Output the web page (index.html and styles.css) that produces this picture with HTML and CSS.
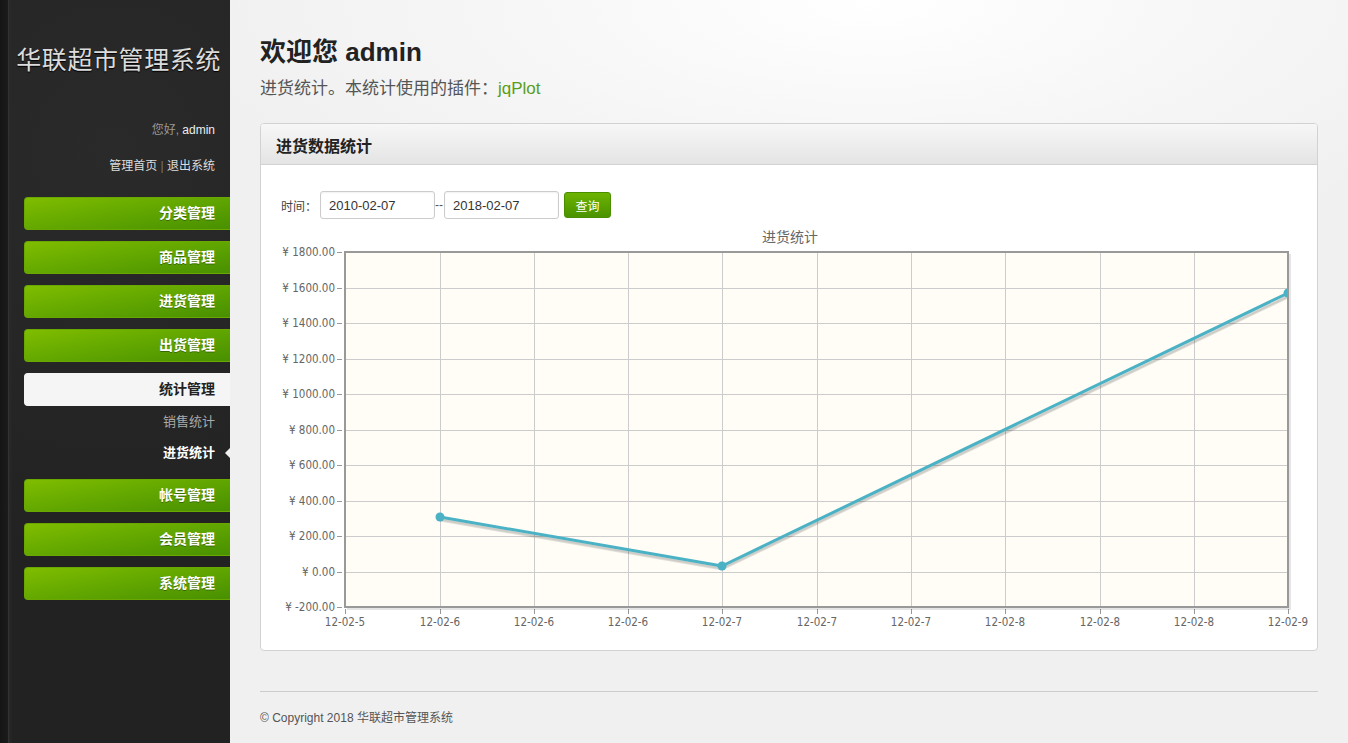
FILE: index.html
```html
<!DOCTYPE html>
<html lang="zh-CN">
<head>
<meta charset="utf-8">
<title>华联超市管理系统</title>
<link rel="stylesheet" href="styles.css">
</head>
<body>
<div class="layout">
  <aside class="sidebar">
    <div class="brand">华联超市管理系统</div>
    <div class="welcome"><span class="muted">您好,</span> admin</div>
    <div class="links"><a href="#">管理首页</a> <span class="sep">|</span> <a href="#">退出系统</a></div>
    <nav class="menu">
      <a class="item" href="#">分类管理</a>
      <a class="item" href="#">商品管理</a>
      <a class="item" href="#">进货管理</a>
      <a class="item" href="#">出货管理</a>
      <a class="item active" href="#">统计管理</a>
      <div class="sub">
        <a class="sub-item" href="#">销售统计</a>
        <a class="sub-item current" href="#">进货统计</a>
      </div>
      <a class="item" href="#">帐号管理</a>
      <a class="item" href="#">会员管理</a>
      <a class="item" href="#">系统管理</a>
    </nav>
  </aside>
  <main class="main">
    <h1 class="title">欢迎您 admin</h1>
    <p class="subtitle">进货统计。本统计使用的插件：<a href="#">jqPlot</a></p>
    <section class="panel">
      <div class="panel-head">进货数据统计</div>
      <div class="panel-body">
        <form class="filter">
          <label class="lbl">时间：</label>
          <input class="date" type="text" value="2010-02-07">
          <span class="dash">--</span>
          <input class="date" type="text" value="2018-02-07">
          <button class="btn" type="button">查询</button>
        </form>
        <svg class="chart" width="1056" height="420" viewBox="0 0 1056 420">
          <defs>
            <clipPath id="plotclip"><rect x="345" y="253" width="943" height="355"/></clipPath>
          </defs>
          <g transform="translate(-261,-225)">
            <text x="790" y="243" class="ctitle" text-anchor="middle">进货统计</text>
            <rect x="345" y="253" width="943" height="355" fill="#fffdf6"/>
            <g class="grid">
              <line x1="345" y1="289" x2="1288" y2="289"/>
              <line x1="345" y1="324" x2="1288" y2="324"/>
              <line x1="345" y1="360" x2="1288" y2="360"/>
              <line x1="345" y1="395" x2="1288" y2="395"/>
              <line x1="345" y1="431" x2="1288" y2="431"/>
              <line x1="345" y1="466" x2="1288" y2="466"/>
              <line x1="345" y1="502" x2="1288" y2="502"/>
              <line x1="345" y1="537" x2="1288" y2="537"/>
              <line x1="345" y1="573" x2="1288" y2="573"/>
              <line x1="440" y1="253" x2="440" y2="608"/>
              <line x1="534" y1="253" x2="534" y2="608"/>
              <line x1="628" y1="253" x2="628" y2="608"/>
              <line x1="722" y1="253" x2="722" y2="608"/>
              <line x1="817" y1="253" x2="817" y2="608"/>
              <line x1="911" y1="253" x2="911" y2="608"/>
              <line x1="1005" y1="253" x2="1005" y2="608"/>
              <line x1="1100" y1="253" x2="1100" y2="608"/>
              <line x1="1194" y1="253" x2="1194" y2="608"/>
            </g>
            <g class="ticks">
              <line x1="337" y1="253.5" x2="342" y2="253.5"/>
              <line x1="337" y1="289.5" x2="342" y2="289.5"/>
              <line x1="337" y1="324.5" x2="342" y2="324.5"/>
              <line x1="337" y1="360.5" x2="342" y2="360.5"/>
              <line x1="337" y1="395.5" x2="342" y2="395.5"/>
              <line x1="337" y1="431.5" x2="342" y2="431.5"/>
              <line x1="337" y1="466.5" x2="342" y2="466.5"/>
              <line x1="337" y1="502.5" x2="342" y2="502.5"/>
              <line x1="337" y1="537.5" x2="342" y2="537.5"/>
              <line x1="337" y1="573.5" x2="342" y2="573.5"/>
              <line x1="337" y1="608.5" x2="342" y2="608.5"/>
              <line x1="345.5" y1="610" x2="345.5" y2="615"/>
              <line x1="440.5" y1="610" x2="440.5" y2="615"/>
              <line x1="534.5" y1="610" x2="534.5" y2="615"/>
              <line x1="628.5" y1="610" x2="628.5" y2="615"/>
              <line x1="722.5" y1="610" x2="722.5" y2="615"/>
              <line x1="817.5" y1="610" x2="817.5" y2="615"/>
              <line x1="911.5" y1="610" x2="911.5" y2="615"/>
              <line x1="1005.5" y1="610" x2="1005.5" y2="615"/>
              <line x1="1100.5" y1="610" x2="1100.5" y2="615"/>
              <line x1="1194.5" y1="610" x2="1194.5" y2="615"/>
              <line x1="1288.5" y1="610" x2="1288.5" y2="615"/>
            </g>
            <g class="ylab" text-anchor="end">
              <text x="335" y="257">¥ 1800.00</text>
              <text x="335" y="293">¥ 1600.00</text>
              <text x="335" y="328">¥ 1400.00</text>
              <text x="335" y="364">¥ 1200.00</text>
              <text x="335" y="399">¥ 1000.00</text>
              <text x="335" y="435">¥ 800.00</text>
              <text x="335" y="470">¥ 600.00</text>
              <text x="335" y="506">¥ 400.00</text>
              <text x="335" y="541">¥ 200.00</text>
              <text x="335" y="577">¥ 0.00</text>
              <text x="335" y="612">¥ -200.00</text>
            </g>
            <g class="xlab" text-anchor="middle">
              <text x="345" y="627">12-02-5</text>
              <text x="440" y="627">12-02-6</text>
              <text x="534" y="627">12-02-6</text>
              <text x="628" y="627">12-02-6</text>
              <text x="722" y="627">12-02-7</text>
              <text x="817" y="627">12-02-7</text>
              <text x="911" y="627">12-02-7</text>
              <text x="1005" y="627">12-02-8</text>
              <text x="1100" y="627">12-02-8</text>
              <text x="1194" y="627">12-02-8</text>
              <text x="1288" y="627">12-02-9</text>
            </g>
            <g clip-path="url(#plotclip)">
              <polyline points="440,521 722,570 1290,297" fill="none" stroke="rgba(0,0,0,0.12)" stroke-width="3"/>
              <polyline points="440,520 722,569 1290,296" fill="none" stroke="rgba(0,0,0,0.08)" stroke-width="3"/>
              <polyline points="440,518 722,567 1288,294" fill="none" stroke="#4bb2c5" stroke-width="3" stroke-linejoin="round"/>
              <circle cx="440" cy="518" r="4.5" fill="#4bb2c5"/>
              <circle cx="722" cy="567" r="4.5" fill="#4bb2c5"/>
              <circle cx="1288" cy="294" r="4.5" fill="#4bb2c5"/>
            </g>
            <polyline points="1290,255 1290,610 347,610" fill="none" stroke="rgba(0,0,0,0.1)" stroke-width="2"/>
            <rect x="345" y="253" width="943" height="355" fill="none" stroke="#999" stroke-width="2"/>
          </g>
        </svg>
      </div>
    </section>
    <footer class="footer">© Copyright 2018 华联超市管理系统</footer>
  </main>
</div>
</body>
</html>
```

FILE: styles.css
```css
* { box-sizing: border-box; }
html, body { margin: 0; padding: 0; height: 100%; }
body {
  font-family: "Liberation Sans", "Noto Sans CJK SC", Arial, sans-serif;
  background: #f0f0f0;
  color: #333;
}
a { text-decoration: none; }

.layout { display: flex; min-height: 743px; }

.sidebar {
  width: 230px;
  flex: 0 0 230px;
  background-color: #232323;
  background-image:
    linear-gradient(90deg, #151515 0, #1b1b1b 8px, #3a3a3a 8px, #2a2a2a 9px, rgba(0,0,0,0) 12px),
    radial-gradient(circle at 50% 20%, #2a2a2a 0, #222 70%);
  text-align: right;
  padding-bottom: 20px;
}
.brand {
  padding-top: 44px;
  padding-right: 9px;
  font-size: 25px;
  line-height: 32px;
  color: #dcdcdc;
  text-shadow: 0 1px 1px #000;
  letter-spacing: 0.6px;
  white-space: nowrap;
}
.welcome {
  margin-top: 45px;
  padding-right: 15px;
  font-size: 12px;
  line-height: 18px;
  color: #eee;
}
.welcome .muted { color: #999; }
.links {
  margin-top: 18px;
  padding-right: 15px;
  font-size: 12px;
  line-height: 18px;
}
.links a { color: #ddd; }
.links .sep { color: #777; }

.menu {
  margin-top: 22px;
  display: flex;
  flex-direction: column;
  align-items: stretch;
}
.item {
  display: block;
  margin-left: 24px;
  height: 33px;
  line-height: 31px;
  margin-bottom: 11px;
  padding-right: 15px;
  border-radius: 4px 0 0 4px;
  background: linear-gradient(170deg, #80bd00 0%, #62a700 50%, #489000 100%);
  border: 1px solid #6aa800;
  border-right: none;
  color: #fff;
  font-size: 14px;
  font-weight: bold;
  text-shadow: 0 1px 0 rgba(0,0,0,0.35);
}
.item.active {
  background: #f5f5f5;
  border-color: #f5f5f5;
  color: #222;
  text-shadow: none;
  margin-bottom: 0;
}
.sub {
  display: flex;
  flex-direction: column;
  margin-bottom: 11px;
}
.sub-item {
  display: block;
  line-height: 31px;
  height: 31px;
  padding-right: 15px;
  font-size: 13px;
  color: #aaa;
  position: relative;
}
.sub-item.current {
  color: #fff;
  font-weight: bold;
}
.sub-item.current::after {
  content: "";
  position: absolute;
  right: 0;
  top: 11px;
  border-style: solid;
  border-width: 5px 5px 5px 0;
  border-color: transparent #f0f0f0 transparent transparent;
}

.main {
  flex: 1;
  padding: 36px 30px 0 30px;
  background: radial-gradient(ellipse 700px 260px at 640px 0, #ffffff 0%, #f6f6f6 55%, #f0f0f0 100%) #f0f0f0;
  background-repeat: no-repeat;
}
.title {
  margin: 0;
  font-size: 26px;
  line-height: 32px;
  font-weight: bold;
  color: #222;
}
.subtitle {
  margin: 10px 0 0;
  font-size: 17px;
  line-height: 22px;
  color: #555;
}
.subtitle a { color: #5a9e1a; }

.panel {
  margin-top: 23px;
  background: #fff;
  border: 1px solid #d2d2d2;
  border-radius: 4px;
  overflow: hidden;
}
.panel-head {
  height: 41px;
  line-height: 41px;
  padding: 2px 0 0 15px;
  font-size: 16px;
  font-weight: bold;
  color: #222;
  background: linear-gradient(#f7f7f7, #e4e4e4);
  border-bottom: 1px solid #d2d2d2;
}
.panel-body {
  padding: 26px 0 6px;
}
.filter {
  display: flex;
  align-items: center;
  padding-left: 20px;
  height: 28px;
  margin: 0;
}
.lbl {
  font-size: 12px;
  color: #444;
  margin-right: 3px;
}
.date {
  width: 115px;
  height: 28px;
  border: 1px solid #ccc;
  border-radius: 3px;
  padding: 0 8px;
  font-family: "Liberation Sans", Arial, sans-serif;
  font-size: 13px;
  color: #333;
  box-shadow: inset 0 1px 2px rgba(0,0,0,0.06);
  background: #fff;
}
.dash {
  font-size: 12px;
  color: #555;
  width: 9px;
  text-align: left;
}
.btn {
  margin-left: 5px;
  width: 47px;
  height: 26px;
  border: 1px solid #4a8e00;
  border-radius: 3px;
  background: linear-gradient(#6cb300, #4b9300);
  color: #fff;
  font-family: "Noto Sans CJK SC", sans-serif;
  font-size: 12px;
  padding: 0;
}
.chart {
  display: block;
  margin-top: 5px;
}
.ctitle {
  font-family: "Noto Sans CJK SC", sans-serif;
  font-size: 14px;
  fill: #666;
}
.grid line { stroke: #cccccc; stroke-width: 1; shape-rendering: crispEdges; }
.ticks line { stroke: #999; stroke-width: 1; shape-rendering: crispEdges; }
.ylab text, .xlab text {
  font-family: "DejaVu Sans Condensed", "Liberation Sans Narrow", "Liberation Sans", sans-serif;
  font-size: 11.5px;
  fill: #666;
}

.footer {
  margin-top: 40px;
  border-top: 1px solid #ccc;
  padding-top: 17px;
  font-size: 12px;
  line-height: 18px;
  color: #555;
}
```
